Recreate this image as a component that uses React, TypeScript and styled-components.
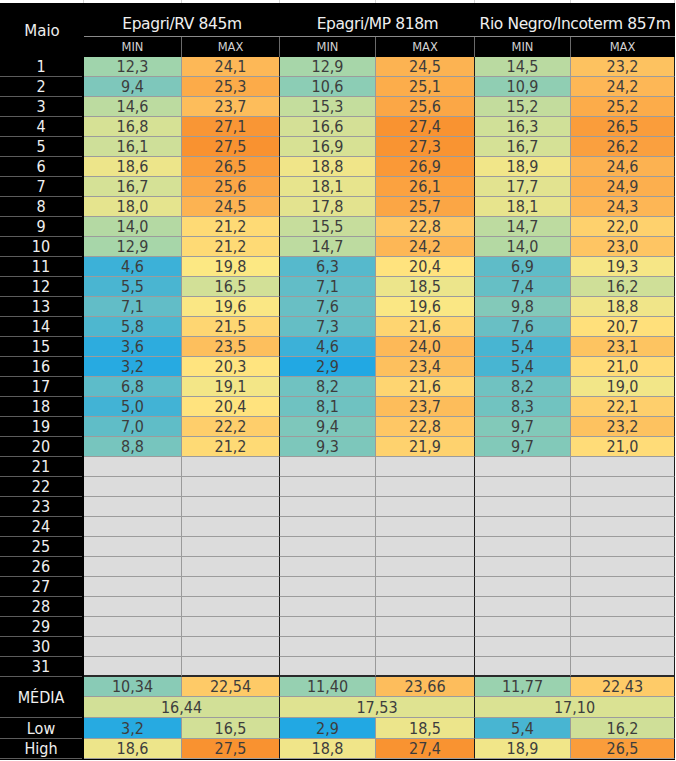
import { Fragment } from "react";
import styled, { createGlobalStyle } from "styled-components";

const GlobalStyle = createGlobalStyle`
  body {
    margin: 0;
    background: #ffffff;
  }
`;

const FONT = `"DejaVu Sans", "Liberation Sans", sans-serif`;
const NUM_FONT = `"DejaVu Sans Condensed", "DejaVu Sans", "Liberation Sans", sans-serif`;

const STATIONS = ["Epagri/RV 845m", "Epagri/MP 818m", "Rio Negro/Incoterm 857m"];

// min, max for each station, day by day
const DAYS: string[][] = [
  ["12,3", "24,1", "12,9", "24,5", "14,5", "23,2"],
  ["9,4", "25,3", "10,6", "25,1", "10,9", "24,2"],
  ["14,6", "23,7", "15,3", "25,6", "15,2", "25,2"],
  ["16,8", "27,1", "16,6", "27,4", "16,3", "26,5"],
  ["16,1", "27,5", "16,9", "27,3", "16,7", "26,2"],
  ["18,6", "26,5", "18,8", "26,9", "18,9", "24,6"],
  ["16,7", "25,6", "18,1", "26,1", "17,7", "24,9"],
  ["18,0", "24,5", "17,8", "25,7", "18,1", "24,3"],
  ["14,0", "21,2", "15,5", "22,8", "14,7", "22,0"],
  ["12,9", "21,2", "14,7", "24,2", "14,0", "23,0"],
  ["4,6", "19,8", "6,3", "20,4", "6,9", "19,3"],
  ["5,5", "16,5", "7,1", "18,5", "7,4", "16,2"],
  ["7,1", "19,6", "7,6", "19,6", "9,8", "18,8"],
  ["5,8", "21,5", "7,3", "21,6", "7,6", "20,7"],
  ["3,6", "23,5", "4,6", "24,0", "5,4", "23,1"],
  ["3,2", "20,3", "2,9", "23,4", "5,4", "21,0"],
  ["6,8", "19,1", "8,2", "21,6", "8,2", "19,0"],
  ["5,0", "20,4", "8,1", "23,7", "8,3", "22,1"],
  ["7,0", "22,2", "9,4", "22,8", "9,7", "23,2"],
  ["8,8", "21,2", "9,3", "21,9", "9,7", "21,0"],
];

const MEDIA = ["10,34", "22,54", "11,40", "23,66", "11,77", "22,43"];
const MEDIA_AVG = ["16,44", "17,53", "17,10"];
const LOW = ["3,2", "16,5", "2,9", "18,5", "5,4", "16,2"];
const HIGH = ["18,6", "27,5", "18,8", "27,4", "18,9", "26,5"];

// colour scale stops (value -> rgb), like the sheet's conditional format
const STOPS: [number, number[]][] = [
  [2.9, [34, 168, 227]],
  [7.5, [104, 191, 196]],
  [12.3, [160, 212, 172]],
  [16.8, [214, 225, 149]],
  [20.0, [255, 232, 130]],
  [24.0, [253, 185, 88]],
  [27.5, [249, 146, 48]],
];

const colorFor = (text: string) => {
  const v = parseFloat(text.replace(",", "."));
  if (v <= STOPS[0][0]) return `rgb(${STOPS[0][1].join(",")})`;
  for (let i = 1; i < STOPS.length; i++) {
    const [v1, c1] = STOPS[i];
    const [v0, c0] = STOPS[i - 1];
    if (v <= v1) {
      const t = (v - v0) / (v1 - v0);
      const c = c0.map((x, k) => Math.round(x + (c1[k] - x) * t));
      return `rgb(${c.join(",")})`;
    }
  }
  return `rgb(${STOPS[STOPS.length - 1][1].join(",")})`;
};

const Sheet = styled.div`
  display: grid;
  width: 675px;
  grid-template-columns: 84px 98px 98px 96px 99px 96px 104px;
  grid-template-rows: 3px 34px 20px repeat(31, 20px) 20px 21px 21px 20px;
  background: #000000;
  border-bottom: 1px solid #000000;
  font-family: ${FONT};
`;

const TopCell = styled.div`
  background: #ffffff;
  border-right: 1px solid #d4d4d4;
`;

const Corner = styled.div`
  grid-row: span 2;
  display: flex;
  align-items: center;
  justify-content: center;
  padding-top: 2px;
  color: #ededed;
  font-size: 15px;
`;

const StationTitle = styled.div`
  grid-column: span 2;
  display: flex;
  align-items: flex-end;
  justify-content: center;
  padding-bottom: 3px;
  border-bottom: 1px solid #8a8a8a;
  color: #efefef;
  font-size: 15.5px;
  letter-spacing: -0.4px;
  white-space: nowrap;
`;

const SubHead = styled.div<{ $last?: boolean }>`
  display: flex;
  align-items: center;
  justify-content: center;
  border-right: 1px solid ${(p) => (p.$last ? "#000000" : "#6a6a6a")};
  color: #d2d2d2;
  font-size: 11.5px;
`;

const RowLabel = styled.div<{ $rows?: number }>`
  grid-row: span ${(p) => p.$rows ?? 1};
  display: flex;
  align-items: center;
  justify-content: center;
  margin-right: 2px;
  border-bottom: 1px solid #5c5c5c;
  color: #f0f0f0;
  font-family: ${NUM_FONT};
  font-size: 16px;
`;

const Cell = styled.div<{ $bg: string; $group?: boolean; $span?: number; $thick?: boolean }>`
  grid-column: span ${(p) => p.$span ?? 1};
  display: flex;
  align-items: center;
  justify-content: center;
  background: ${(p) => p.$bg};
  border-right: 1px solid ${(p) => (p.$group ? "#1c1c1c" : "#9a9a9a")};
  border-bottom: ${(p) => (p.$thick ? "2px solid #2a2a2a" : "1px solid #9c9c9c")};
  color: #3d3d3d;
  font-family: ${NUM_FONT};
  font-size: 16px;
`;

const ValueRow = ({ values }: { values: string[] }) => (
  <>
    {values.map((v, i) => (
      <Cell key={i} $bg={colorFor(v)} $group={i % 2 === 1}>
        {v}
      </Cell>
    ))}
  </>
);

const EmptyRow = ({ thick }: { thick?: boolean }) => (
  <>
    {Array.from({ length: 6 }).map((_, i) => (
      <Cell key={i} $bg="#dcdcdc" $group={i % 2 === 1} $thick={thick} />
    ))}
  </>
);

export default function App() {
  return (
    <>
      <GlobalStyle />
      <Sheet>
        {Array.from({ length: 7 }).map((_, i) => (
          <TopCell key={i} />
        ))}

        <Corner>Maio</Corner>
        {STATIONS.map((s) => (
          <StationTitle key={s}>{s}</StationTitle>
        ))}
        {STATIONS.map((s, i) => (
          <Fragment key={s}>
            <SubHead>MIN</SubHead>
            <SubHead $last={i === 2}>MAX</SubHead>
          </Fragment>
        ))}

        {Array.from({ length: 31 }).map((_, d) => (
          <Fragment key={d}>
            <RowLabel>{d + 1}</RowLabel>
            {d < DAYS.length ? <ValueRow values={DAYS[d]} /> : <EmptyRow thick={d === 30} />}
          </Fragment>
        ))}

        <RowLabel $rows={2}>MÉDIA</RowLabel>
        <ValueRow values={MEDIA} />
        {MEDIA_AVG.map((v, i) => (
          <Cell key={i} $bg={colorFor(v)} $group $span={2}>
            {v}
          </Cell>
        ))}

        <RowLabel>Low</RowLabel>
        <ValueRow values={LOW} />
        <RowLabel>High</RowLabel>
        <ValueRow values={HIGH} />
      </Sheet>
    </>
  );
}
